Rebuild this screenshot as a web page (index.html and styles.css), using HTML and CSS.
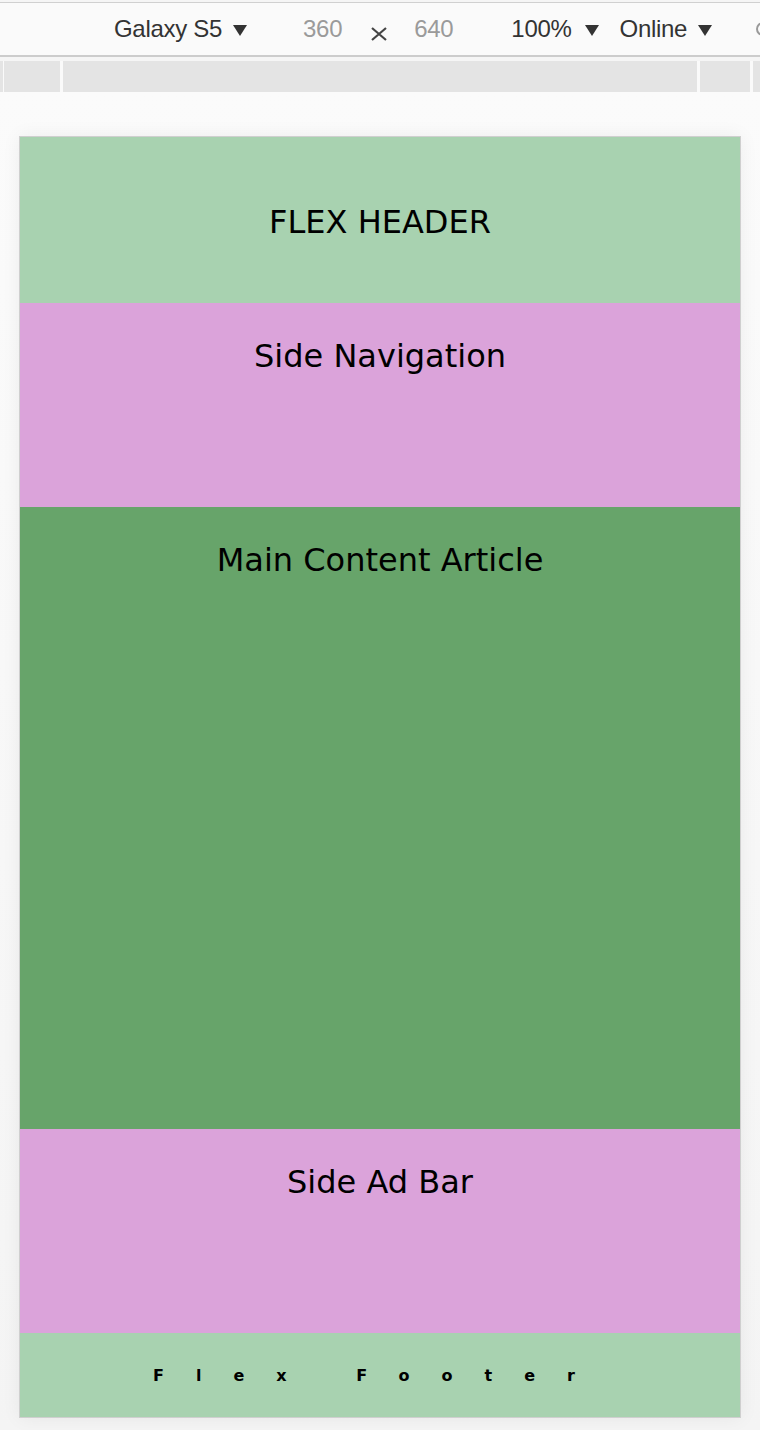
FILE: index.html
```html
<!DOCTYPE html>
<html>
<head>
<meta charset="utf-8">
<link rel="stylesheet" href="styles.css">
</head>
<body>
<div class="toolbar">
  <span class="tb-item device">Galaxy S5</span>
  <svg class="caret caret-device" width="14" height="11" viewBox="0 0 14 11"><polygon points="0,0 14,0 7,11" fill="#333"/></svg>
  <span class="tb-item dim w">360</span>
  <svg class="times" width="18" height="14" viewBox="0 0 18 14"><path d="M2 1 L16 13 M16 1 L2 13" stroke="#444" stroke-width="2.2" fill="none"/></svg>
  <span class="tb-item dim h">640</span>
  <span class="tb-item zoom">100%</span>
  <svg class="caret caret-zoom" width="14" height="11" viewBox="0 0 14 11"><polygon points="0,0 14,0 7,11" fill="#333"/></svg>
  <span class="tb-item online">Online</span>
  <svg class="caret caret-online" width="14" height="11" viewBox="0 0 14 11"><polygon points="0,0 14,0 7,11" fill="#333"/></svg>
  <svg class="rotate" width="16" height="18" viewBox="0 0 16 18"><path d="M9 3 A6 6 0 1 0 9 15" stroke="#999" stroke-width="2" fill="none"/></svg>
</div>
<div class="ruler">
  <div class="r-seg r1"></div>
  <div class="r-seg r2"></div>
  <div class="r-seg r3"></div>
  <div class="r-seg r4"></div>
</div>
<div class="stage">
  <div class="card">
    <header class="sec header"><span>FLEX HEADER</span></header>
    <nav class="sec side nav">Side Navigation</nav>
    <article class="sec main">Main Content Article</article>
    <aside class="sec side ad">Side Ad Bar</aside>
    <footer class="sec footer"><span>Flex Footer</span></footer>
  </div>
</div>
</body>
</html>
```

FILE: styles.css
```css
html, body {
  margin: 0;
  padding: 0;
}
body {
  width: 760px;
  height: 1430px;
  background: #f5f5f5;
  overflow: hidden;
}
.toolbar {
  height: 52px;
  margin-top: 2px;
  border-top: 1px solid #d0d0d0;
  border-bottom: 2px solid #cccccc;
  background: #fafafa;
  display: flex;
  align-items: center;
  font-family: "Liberation Sans", Arial, sans-serif;
  font-size: 24px;
  color: #333;
  padding-left: 114px;
  box-sizing: content-box;
  white-space: nowrap;
  overflow: hidden;
}
.tb-item {
  line-height: 26px;
  letter-spacing: -0.3px;
}
.caret {
  flex: none;
  margin-top: 2px;
}
.caret-device { margin-left: 11px; }
.dim { color: #9a9a9a; }
.w { margin-left: 56px; }
.times { flex: none; margin-left: 28px; margin-top: 9px; }
.h { margin-left: 26px; }
.zoom { margin-left: 58px; }
.caret-zoom { margin-left: 13px; }
.online { margin-left: 21px; }
.caret-online { margin-left: 11px; }
.rotate { flex: none; margin-left: 42px; }

.ruler {
  margin-top: 4px;
  height: 31px;
  background: #e4e4e4;
  display: flex;
}
.r-seg {
  height: 100%;
  box-sizing: border-box;
  border-right: 3px solid #fafafa;
}
.r1 { width: 4px; border-right: 1px solid #fafafa; }
.r2 { width: 59px; }
.r3 { width: 637px; }
.r4 { width: 53px; }

.stage {
  padding: 44px 0 0 19px;
  background: linear-gradient(#fbfbfb, #f4f4f4);
  height: 1294px;
}
.card {
  width: 720px;
  border: 1px solid #cfcfcf;
  box-shadow: 0 0 18px rgba(0, 0, 0, 0.06);
  display: flex;
  flex-direction: column;
  font-family: "DejaVu Sans", Verdana, sans-serif;
  color: #000;
  font-size: 32px;
  text-align: center;
}
.sec {
  box-sizing: border-box;
  line-height: 37px;
}
.header {
  height: 166px;
  background: #a8d2b0;
  padding-top: 67px;
}
.side {
  height: 204px;
  background: #dba3da;
  padding-top: 35px;
}
.main {
  height: 622px;
  background: #67a46a;
  padding-top: 35px;
}
.footer {
  height: 84px;
  background: #a8d2b0;
  display: flex;
  align-items: center;
  justify-content: center;
  font-size: 16px;
  font-weight: bold;
  line-height: 19px;
}
.footer span {
  letter-spacing: 32px;
}
```
